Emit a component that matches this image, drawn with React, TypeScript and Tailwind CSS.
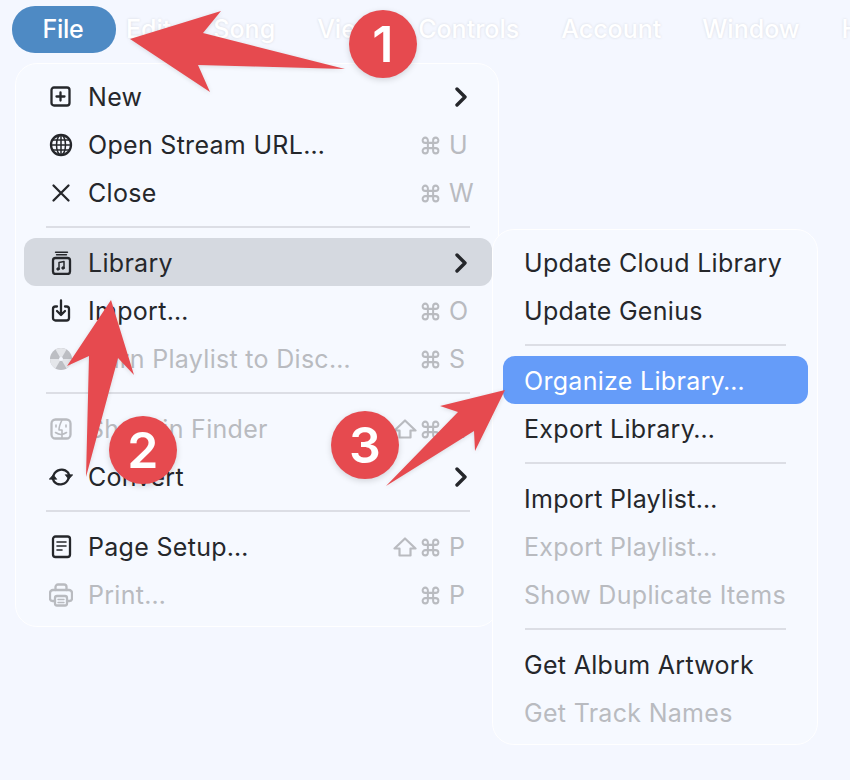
import { Command } from "lucide-react"
import type { ReactNode } from "react"

const iconClass = "fill-none stroke-current stroke-[2.3]"

function IconBox({ children }: { children: ReactNode }) {
  return (
    <svg viewBox="0 0 24 24" className={`h-6 w-6 shrink-0 ${iconClass}`} strokeLinecap="round" strokeLinejoin="round">
      {children}
    </svg>
  )
}

const NewIcon = () => (
  <IconBox>
    <rect x="2.500" y="2.500" width="18" height="18" rx="2.500" />
    <path d="M11.500 7.500v8M7.500 11.500h8" />
  </IconBox>
)

const GlobeIcon = () => (
  <IconBox>
    <circle cx="12" cy="12" r="10" />
    <g className="stroke-[1.5]">
      <ellipse cx="12" cy="12" rx="4.500" ry="10" />
      <path d="M12 2v20M2 12h20M3.500 7h17M3.500 17h17" />
    </g>
  </IconBox>
)

const CloseIcon = () => (
  <IconBox>
    <path d="M4.500 4.500l15 15M19.500 4.500l-15 15" />
  </IconBox>
)

const LibraryIcon = () => (
  <IconBox>
    <rect x="4" y="7" width="17" height="16" rx="2.500" />
    <path d="M7.500 3.800h10" className="stroke-[1.4]" />
    <path d="M6.500 1.200h12" className="stroke-[1.4]" />
    <path d="M10 18V11.500l5-1V17" className="stroke-[1.5]" />
    <circle cx="9" cy="18" r="1.200" className="fill-current stroke-[1]" />
    <circle cx="14" cy="17" r="1.200" className="fill-current stroke-[1]" />
  </IconBox>
)

const ImportIcon = () => (
  <IconBox>
    <path d="M8 7.500H6.500A2.500 2.500 0 0 0 4 10v9a2.500 2.500 0 0 0 2.500 2.500h11A2.500 2.500 0 0 0 20 19v-9a2.500 2.500 0 0 0-2.500-2.500H16" />
    <path d="M12 1.500v14M8 12l4 4 4-4" />
  </IconBox>
)

const BurnIcon = () => (
  <svg viewBox="0 0 24 24" className="h-6 w-6 shrink-0">
    <circle cx="12" cy="12" r="11" fill="#bcbec3" />
    <path d="M12 12L6.500 2.500A11 11 0 0 1 17.500 2.500Z" fill="#e4e6ea" />
    <path d="M12 12L23 12A11 11 0 0 1 17.500 21.500Z" fill="#e4e6ea" />
    <path d="M12 12L6.500 21.500A11 11 0 0 1 1 12Z" fill="#e4e6ea" />
    <circle cx="12" cy="12" r="2" fill="#f5f8ff" />
  </svg>
)

const FinderIcon = () => (
  <IconBox>
    <rect x="2.500" y="2.500" width="19" height="19" rx="4" />
    <path d="M13 3c-2 4-3 7-3 10h3v8M7 8v2M17 8v2M6.500 15.500c3.500 2.500 7.500 2.500 11 0" className="stroke-[1.600]" />
  </IconBox>
)

const ConvertIcon = () => (
  <IconBox>
    <path d="M4.500 10.500A8.500 8.500 0 0 1 19 7.500l1.300 3" />
    <path d="M19.500 13.500A8.500 8.500 0 0 1 5 16.500l-1.300-3" />
    <path d="M23.500 10l-3.800 4.300-3.200-4.300Z" className="fill-current stroke-[0.8]" />
    <path d="M0.500 14l3.800-4.300 3.200 4.300Z" className="fill-current stroke-[0.8]" />
  </IconBox>
)

const PageIcon = () => (
  <IconBox>
    <rect x="4" y="1.500" width="17" height="20.500" rx="2.500" />
    <path d="M8 7h9M8 11h9M8 15h5" className="stroke-[1.600]" />
  </IconBox>
)

const PrintIcon = () => (
  <IconBox>
    <path d="M6.500 7V4a2.500 2.500 0 0 1 2.500-2.500h6A2.500 2.500 0 0 1 17.500 4v3" />
    <path d="M5 18H3.500A2.500 2.500 0 0 1 1 15.500V10a3 3 0 0 1 3-3h16a3 3 0 0 1 3 3v5.500a2.500 2.500 0 0 1-2.500 2.500H19" />
    <rect x="6" y="13" width="12" height="9.500" rx="2" />
    <path d="M9 16.500h6M9 19.500h6" className="stroke-[1.400]" />
  </IconBox>
)

const Chevron = () => (
  <svg viewBox="0 0 14 20" className="ml-auto mr-[24px] h-[20px] w-[14px] fill-none stroke-[#25272b] stroke-[3.400]" strokeLinecap="round" strokeLinejoin="round">
    <path d="M3 2l8 8-8 8" />
  </svg>
)

const ShiftIcon = () => (
  <svg viewBox="0 0 24 20" className="mr-[3px] h-[20px] w-[24px] fill-none stroke-current stroke-[2.2]" strokeLinejoin="round">
    <path d="M12 1.500L22.500 11.500H17.500V18.500H6.500V11.500H1.500Z" />
  </svg>
)

function Shortcut({ letter, shift }: { letter: string; shift?: boolean }) {
  return (
    <div className="ml-auto flex items-center text-[#b9bbc0]">
      {shift && <ShiftIcon />}
      <Command size={21} strokeWidth={2.300} />
      <span className="ml-[8px] w-[43px]">{letter}</span>
    </div>
  )
}

type RowProps = {
  icon: ReactNode
  label: string
  letter?: string
  shift?: boolean
  submenu?: boolean
  disabled?: boolean
  active?: boolean
  low?: boolean
}

function Row({ icon, label, letter, shift, submenu, disabled, active, low }: RowProps) {
  return (
    <div className={`flex h-[48px] items-center rounded-[12px] pl-[25px] ${low ? "pt-[2px]" : ""} ${active ? "bg-[#d5d9e0]" : ""} ${disabled ? "text-[#b9bbc0]" : "text-[#25272b]"}`}>
      {icon}
      <span className="ml-[15px]">{label}</span>
      {letter && <Shortcut letter={letter} shift={shift} />}
      {submenu && <Chevron />}
    </div>
  )
}

function SubRow({ label, disabled, active, low }: { label: string; disabled?: boolean; active?: boolean; low?: boolean }) {
  return (
    <div className={`flex h-[48px] items-center rounded-[12px] pl-[21px] ${low ? "pt-[2px]" : ""} ${active ? "bg-[#659cf9] text-white" : disabled ? "text-[#b9bbc0]" : "text-[#25272b]"}`}>
      {label}
    </div>
  )
}

function Sep({ className }: { className: string }) {
  return (
    <div className={`mx-[22px] ${className}`}>
      <div className="h-[2px] w-full bg-[#dcdee5]" />
    </div>
  )
}

function Badge({ n, className }: { n: number; className: string }) {
  return (
    <div className={`absolute flex h-[68px] w-[68px] items-center justify-center rounded-full bg-[#e64a4f] text-[50px] font-semibold text-white shadow-[0_2px_6px_rgba(0,0,0,0.15)] ${className}`}>
      {n}
    </div>
  )
}

export default function App() {
  const menus = ["Edit", "Song", "View", "Controls", "Account", "Window", "Help"]

  return (
    <div className="relative h-[780px] w-[850px] overflow-hidden bg-[#f4f7ff] font-['Inter',sans-serif] text-[25px] leading-[24px] tracking-[0.3px]">
      {/* menu bar */}
      <div className="flex items-center pl-[12px] pt-[6px] tracking-normal">
        <div className="mr-[10px] flex h-[47px] w-[104px] shrink-0 items-center justify-center rounded-[23px] bg-[#4e8ac4] pb-[2px] pr-[2px] font-medium tracking-[-0.3px] text-white">
          File
        </div>
        {menus.map((m, i) => (
          <span key={m} className={`${i === 4 ? "mr-[41px]" : "mr-[42px]"} shrink-0 pb-[2px] font-medium text-white [text-shadow:0_0_3px_rgba(0,0,0,0.12)]`}>
            {m}
          </span>
        ))}
      </div>

      {/* file menu */}
      <div className="ml-[15px] mt-[10px] w-[484px] rounded-[22px] border border-white bg-[#f6f9ff] pb-[7px] pl-[8px] pr-[6px] pt-[9px]">
        <Row icon={<NewIcon />} label="New" submenu />
        <Row icon={<GlobeIcon />} label="Open Stream URL…" letter="U" />
        <Row icon={<CloseIcon />} label="Close" letter="W" />
        <Sep className="h-[21px] pt-[9px]" />
        <Row icon={<LibraryIcon />} label="Library" submenu active low />
        <Row icon={<ImportIcon />} label="Import…" letter="O" low />
        <Row icon={<BurnIcon />} label="Burn Playlist to Disc…" letter="S" disabled low />
        <Sep className="h-[23px] pt-[10px]" />
        <Row icon={<FinderIcon />} label="Show in Finder" letter="R" shift disabled />
        <Row icon={<ConvertIcon />} label="Convert" submenu />
        <Sep className="h-[22px] pt-[9px]" />
        <Row icon={<PageIcon />} label="Page Setup…" letter="P" shift />
        <Row icon={<PrintIcon />} label="Print…" letter="P" disabled />
      </div>

      {/* library submenu */}
      <div className="absolute left-[492px] top-[229px] w-[326px] rounded-[22px] border border-white bg-[#f6f9ff] pb-[7px] pl-[10px] pr-[9px] pt-[9px]">
        <SubRow label="Update Cloud Library" />
        <SubRow label="Update Genius" />
        <Sep className="h-[21px] pt-[9px]" />
        <SubRow label="Organize Library…" active low />
        <SubRow label="Export Library…" low />
        <Sep className="h-[23px] pt-[10px]" />
        <SubRow label="Import Playlist…" />
        <SubRow label="Export Playlist…" disabled />
        <SubRow label="Show Duplicate Items" disabled />
        <Sep className="h-[22px] pt-[9px]" />
        <SubRow label="Get Album Artwork" />
        <SubRow label="Get Track Names" disabled />
      </div>

      {/* annotation arrows */}
      <svg viewBox="0 0 850 780" className="pointer-events-none absolute left-0 top-0 h-[780px] w-[850px] fill-[#e64a4f] drop-shadow-[0_1px_2px_rgba(0,0,0,0.12)]">
        <polygon points="130,39 221,11 203,33 345,69 198,65 210,92" />
        <polygon points="111,300 134,375 118,358 86,477 89,356 67,366" />
        <polygon points="505,390 475,451 474,431 386,486 458,412 440,406" />
      </svg>
      <Badge n={1} className="left-[349px] top-[10px]" />
      <Badge n={2} className="left-[109px] top-[416px]" />
      <Badge n={3} className="left-[331px] top-[411px]" />
    </div>
  )
}
